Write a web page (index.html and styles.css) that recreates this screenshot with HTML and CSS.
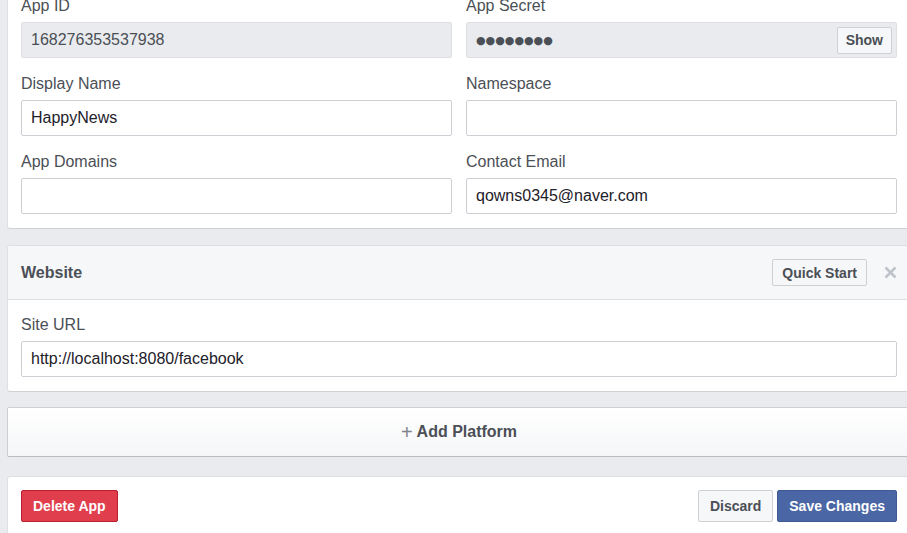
FILE: index.html
```html
<!DOCTYPE html>
<html>
<head>
<meta charset="utf-8">
<link rel="stylesheet" href="styles.css">
</head>
<body>
<div class="page">
  <section class="card">
    <div class="grid">
      <div class="field">
        <div class="label">App ID</div>
        <div class="input disabled">168276353537938</div>
      </div>
      <div class="field">
        <div class="label">App Secret</div>
        <div class="input disabled secret"><span class="dots">●●●●●●●●</span><button class="btn small">Show</button></div>
      </div>
      <div class="field">
        <div class="label">Display Name</div>
        <div class="input">HappyNews</div>
      </div>
      <div class="field">
        <div class="label">Namespace</div>
        <div class="input"></div>
      </div>
      <div class="field">
        <div class="label">App Domains</div>
        <div class="input"></div>
      </div>
      <div class="field">
        <div class="label">Contact Email</div>
        <div class="input">qowns0345@naver.com</div>
      </div>
    </div>
  </section>

  <section class="card platform">
    <div class="card-head">
      <span class="head-title">Website</span>
      <div class="head-actions">
        <button class="btn small">Quick Start</button>
        <svg class="close" width="13" height="13" viewBox="0 0 13 13"><path d="M1.5 1.5 L11.5 11.5 M11.5 1.5 L1.5 11.5" stroke="#bec2c9" stroke-width="2.6" stroke-linecap="butt"/></svg>
      </div>
    </div>
    <div class="card-body">
      <div class="label">Site URL</div>
      <div class="input">http://localhost:8080/facebook</div>
    </div>
  </section>

  <div class="add-platform"><span class="plus">+</span> Add Platform</div>

  <section class="card footer">
    <button class="btn danger">Delete App</button>
    <div class="footer-right">
      <button class="btn">Discard</button>
      <button class="btn primary">Save Changes</button>
    </div>
  </section>
</div>
</body>
</html>
```
FILE: styles.css
```css
html, body {
  margin: 0;
  padding: 0;
  overflow: hidden;
  background: #e9ebee;
  font-family: "Liberation Sans", Arial, sans-serif;
  color: #4b4f56;
}

.page {
  margin-top: -20px;
  padding-left: 7px;
  width: 904px;
}

.card {
  background: #fff;
  border: 1px solid #dddfe2;
  border-bottom-color: #d0d1d5;
  border-radius: 3px;
  box-sizing: border-box;
  width: 904px;
}

.card:first-child {
  padding: 14px 13px 14px 13px;
}

.grid {
  display: grid;
  grid-template-columns: 431px 431px;
  column-gap: 14px;
  row-gap: 15px;
}

.label {
  font-size: 16px;
  line-height: 20px;
  padding-top: 1px;
  margin-bottom: 6px;
  color: #4b4f56;
}

.input {
  height: 36px;
  box-sizing: border-box;
  border: 1px solid #ccd0d5;
  border-radius: 2px;
  background: #fff;
  padding: 0 9px;
  display: flex;
  align-items: center;
  font-size: 16px;
  color: #1d2129;
}

.input.disabled {
  background: #e9ebee;
  border-color: #dddfe2;
  color: #4b4f56;
}

.input.secret {
  justify-content: space-between;
  padding-right: 4px;
}

.dots {
  font-family: "DejaVu Sans", sans-serif;
  font-size: 11px;
  letter-spacing: 0;
  color: #4b4f56;
}

.btn {
  font-family: "Liberation Sans", Arial, sans-serif;
  font-weight: bold;
  font-size: 14px;
  height: 32px;
  box-sizing: border-box;
  padding: 0 11px;
  border: 1px solid #ced0d4;
  border-radius: 2px;
  background: #f6f7f9;
  color: #4b4f56;
  display: inline-flex;
  align-items: center;
}

.btn.small {
  height: 27px;
  padding: 0 8px;
}

.head-actions .btn.small {
  padding: 0 9px;
}

.btn.danger {
  background: #e03e4c;
  border-color: #b8202e;
  color: #fff;
}

.btn.primary {
  background: #4a66a4;
  border-color: #3f5a94;
  color: #fff;
}

.platform {
  margin-top: 16px;
  margin-bottom: 15px;
}

.card-head {
  background: #f6f7f9;
  border-bottom: 1px solid #dddfe2;
  height: 54px;
  box-sizing: border-box;
  padding: 0 13px 0 13px;
  display: flex;
  align-items: center;
  justify-content: space-between;
}

.head-title {
  font-weight: bold;
  font-size: 16px;
  color: #4b4f56;
}

.head-actions {
  display: flex;
  align-items: center;
  gap: 17px;
}

.card-body {
  padding: 14px 13px 14px 13px;
}

.add-platform {
  width: 904px;
  height: 50px;
  box-sizing: border-box;
  border: 1px solid #ccd0d5;
  border-bottom-color: #b8bbc0;
  border-radius: 2px;
  background: linear-gradient(#ffffff, #f5f6f8);
  display: flex;
  align-items: center;
  justify-content: center;
  font-weight: bold;
  font-size: 16px;
  color: #4b4f56;
}

.plus {
  color: #7f838a;
  font-weight: normal;
  font-size: 20px;
  margin-right: 4px;
}

.footer {
  margin-top: 19px;
  padding: 13px 13px 20px 13px;
  display: flex;
  justify-content: space-between;
  align-items: center;
}

.footer-right {
  display: flex;
  gap: 4px;
}
```
